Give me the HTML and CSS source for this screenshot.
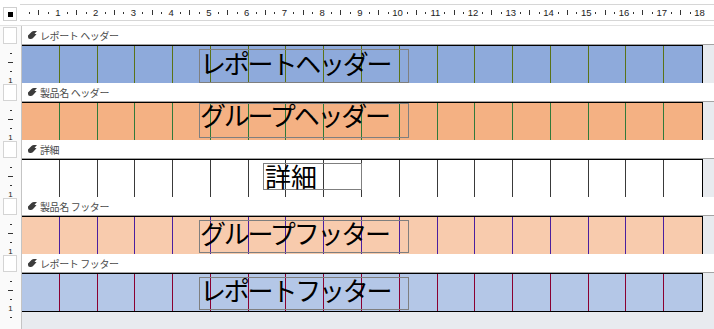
FILE: index.html
```html
<!DOCTYPE html>
<html lang="ja">

<head>
    <meta charset="UTF-8">
    <title>レポート デザイン ビュー</title>
    <link rel="stylesheet" href="styles.css">
</head>

<body>
    <div class="designer">
        <!-- Ruler row -->
        <div class="top">
            <div class="corner"><span></span></div>
            <div class="hruler" id="hruler"></div>
        </div>

        <!-- レポート ヘッダー -->
        <div class="sec-bar">
            <div class="vcol"><div class="vbox"></div></div>
            <div class="bar-label"><svg class="sec-icon" width="9" height="8" viewBox="0 0 9 8"><path d="M0 4.5 L3.5 1 Q4.5 0 6 0 L9 0 L6.5 2.8 L8.5 3.2 L4.8 7.2 Q4 8 2.8 8 L2 8 Q0 8 0 6 Z"/></svg>レポート ヘッダー</div>
        </div>
        <div class="sec-body">
            <div class="vcol vticks" data-ticks="4"></div>
            <div class="band report-head">
                <div class="cells"></div>
                <div class="ctl c1">レポートヘッダー</div>
            </div>
        </div>

        <!-- 製品名 ヘッダー -->
        <div class="sec-bar">
            <div class="vcol"><div class="vbox"></div></div>
            <div class="bar-label"><svg class="sec-icon" width="9" height="8" viewBox="0 0 9 8"><path d="M0 4.5 L3.5 1 Q4.5 0 6 0 L9 0 L6.5 2.8 L8.5 3.2 L4.8 7.2 Q4 8 2.8 8 L2 8 Q0 8 0 6 Z"/></svg>製品名 ヘッダー</div>
        </div>
        <div class="sec-body">
            <div class="vcol vticks" data-ticks="4"></div>
            <div class="band group-head">
                <div class="cells"></div>
                <div class="ctl c2">グループヘッダー</div>
            </div>
        </div>

        <!-- 詳細 -->
        <div class="sec-bar">
            <div class="vcol"><div class="vbox"></div></div>
            <div class="bar-label"><svg class="sec-icon" width="9" height="8" viewBox="0 0 9 8"><path d="M0 4.5 L3.5 1 Q4.5 0 6 0 L9 0 L6.5 2.8 L8.5 3.2 L4.8 7.2 Q4 8 2.8 8 L2 8 Q0 8 0 6 Z"/></svg>詳細</div>
        </div>
        <div class="sec-body">
            <div class="vcol vticks" data-ticks="4"></div>
            <div class="band detail">
                <div class="cells"></div>
                <div class="ctl c3">詳細</div>
            </div>
        </div>

        <!-- 製品名 フッター -->
        <div class="sec-bar">
            <div class="vcol"><div class="vbox"></div></div>
            <div class="bar-label"><svg class="sec-icon" width="9" height="8" viewBox="0 0 9 8"><path d="M0 4.5 L3.5 1 Q4.5 0 6 0 L9 0 L6.5 2.8 L8.5 3.2 L4.8 7.2 Q4 8 2.8 8 L2 8 Q0 8 0 6 Z"/></svg>製品名 フッター</div>
        </div>
        <div class="sec-body">
            <div class="vcol vticks" data-ticks="4"></div>
            <div class="band group-foot">
                <div class="cells"></div>
                <div class="ctl c4">グループフッター</div>
            </div>
        </div>

        <!-- レポート フッター -->
        <div class="sec-bar">
            <div class="vcol"><div class="vbox"></div></div>
            <div class="bar-label"><svg class="sec-icon" width="9" height="8" viewBox="0 0 9 8"><path d="M0 4.5 L3.5 1 Q4.5 0 6 0 L9 0 L6.5 2.8 L8.5 3.2 L4.8 7.2 Q4 8 2.8 8 L2 8 Q0 8 0 6 Z"/></svg>レポート フッター</div>
        </div>
        <div class="sec-body last">
            <div class="vcol vticks" data-ticks="4"></div>
            <div class="band report-foot">
                <div class="cells"></div>
                <div class="ctl c5">レポートフッター</div>
            </div>
        </div>

        <div class="tail">
            <div class="vcol vticks tail-ticks" data-ticks="1"></div>
        </div>
    </div>

    <script>
        // Horizontal ruler: quarter-centimetre marks, number on every cm
        const ruler = document.getElementById('hruler');
        for (let cm = 1; cm <= 18; cm++) {
            ruler.insertAdjacentHTML('beforeend',
                '<span class="mk dot"></span><span class="mk half"></span>' +
                '<span class="mk dot"></span><span class="mk num">' + cm + '</span>');
        }

        // Vertical ruler marks beside each band
        const kinds = ['dot', 'half', 'dot', 'num'];
        document.querySelectorAll('.vticks').forEach(col => {
            const count = Number(col.dataset.ticks);
            for (let i = 0; i < count; i++) {
                const kind = kinds[i % 4];
                col.insertAdjacentHTML('beforeend',
                    `<span class="vt ${kind}">${kind === 'num' ? '1' : ''}</span>`);
            }
        });

        // 1cm grid inside every band
        document.querySelectorAll('.cells').forEach(grid => {
            grid.innerHTML = '<span></span>'.repeat(18);
        });
    </script>
</body>

</html>
```

FILE: styles.css
```css
/* Base */
* {
    box-sizing: border-box;
}

body {
    margin: 0;
    width: 714px;
    height: 329px;
    overflow: hidden;
    background: #e8ebef;
    font-family: "Noto Sans CJK JP", sans-serif;
}

.designer {
    display: flex;
    flex-direction: column;
    height: 100%;
}

/* Ruler row */
.top {
    flex: none;
    height: 26px;
    display: flex;
    background: #fff;
    border-bottom: 1px solid #e2e2e2;
}

.corner {
    width: 14px;
    height: 14px;
    margin: 7px 0 0 3px;
    border: 1px solid #cfcfcf;
    display: flex;
    align-items: center;
    justify-content: center;
}

.corner span {
    width: 5px;
    height: 5px;
    background: #000;
}

.hruler {
    flex: 1;
    height: 17px;
    margin: 4px 0 0 3px;
    padding-left: 4.8px;
    border-top: 1px solid #d6d6d6;
    border-bottom: 1px solid #d6d6d6;
    display: flex;
    align-items: center;
    font: 9.5px "Liberation Sans", Arial, sans-serif;
    color: #222;
}

.mk {
    flex: none;
    width: 9.45px;
    display: flex;
    align-items: center;
    justify-content: center;
}

.mk.dot::before,
.mk.half::before {
    content: "";
    width: 1px;
    height: 2px;
    background: #333;
}

.mk.half::before {
    height: 5px;
}

/* Vertical ruler column */
.vcol {
    flex: none;
    width: 22px;
    background: #fafafa;
    border-right: 1px solid #c4c4c4;
}

.vbox {
    width: 14px;
    height: 17px;
    margin: 1px 0 0 3px;
    border: 1px solid #d4d4d4;
    background: #fff;
}

.vticks {
    display: flex;
    flex-direction: column;
    padding-top: 4px;
}

.tail-ticks {
    padding-top: 1px;
}

.vt {
    flex: none;
    height: 9px;
    display: flex;
    align-items: center;
    justify-content: center;
    font: 8px/9px "Liberation Sans", Arial, sans-serif;
    color: #222;
}

.vt.dot::before,
.vt.half::before {
    content: "";
    width: 2px;
    height: 1px;
    background: #333;
}

.vt.half::before {
    width: 5px;
}

/* Section bars */
.sec-bar {
    flex: none;
    height: 19px;
    display: flex;
    background: #fff;
}

.bar-label {
    flex: 1;
    display: flex;
    align-items: center;
    gap: 3px;
    padding-left: 6px;
    border-bottom: 1px solid #a3a3a3;
    font-size: 10px;
    letter-spacing: -0.4px;
    color: #4a4a4a;
}

.sec-icon {
    fill: #3c3c3c;
}

/* Bands */
.sec-body {
    flex: none;
    height: 38px;
    display: flex;
}

.sec-body.last {
    height: 39px;
}

.band {
    flex: none;
    width: 681px;
    position: relative;
    border-top: 1px solid #000;
    border-right: 1px solid #000;
    background: var(--fill);
}

.sec-body.last .band {
    border-bottom: 1px solid #000;
}

.cells {
    display: grid;
    grid-template-columns: repeat(18, 1fr);
    height: 100%;
}

.cells span {
    border-right: 1px solid var(--line);
}

.cells span:last-child {
    border-right: 0;
}

.report-head { --fill: #8eaadb; --line: #5b7316; }
.group-head  { --fill: #f4b183; --line: #2f7a3a; }
.detail      { --fill: #ffffff; --line: #3a3a3a; }
.group-foot  { --fill: #f8cbad; --line: #4a1fa0; }
.report-foot { --fill: #b4c7e7; --line: #8a0030; }

.tail {
    flex: 1;
    display: flex;
}

/* Controls on the design surface */
.ctl {
    position: absolute;
    left: 177px;
    width: 210px;
    border: 1px solid #7f7f7f;
    font-size: 26px;
    line-height: 26px;
    letter-spacing: -2.2px;
    color: #000;
    white-space: nowrap;
}

.c1 { top: 3px; height: 34px; }
.c2 { top: 0; height: 35px; line-height: 22px; }
.c3 { top: 3px; left: 241px; width: 99px; height: 27px; padding-left: 1px; line-height: 23px; letter-spacing: 0; }
.c4 { top: 3px; height: 33px; line-height: 24px; }
.c5 { top: 3px; height: 33px; line-height: 24px; }
```
